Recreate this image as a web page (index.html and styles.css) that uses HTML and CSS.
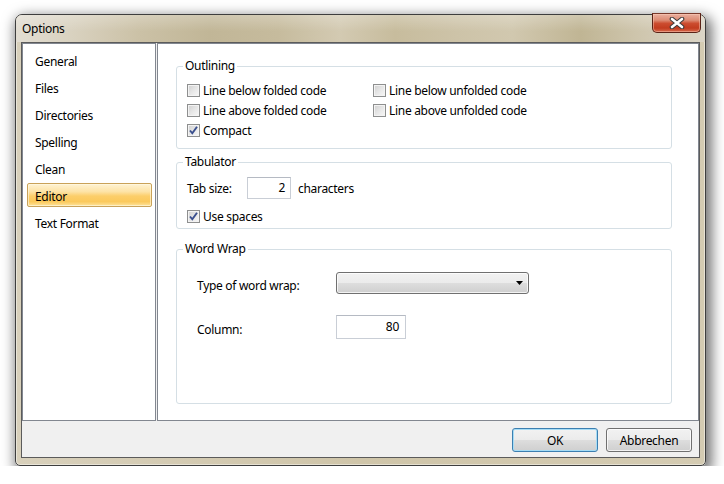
FILE: index.html
```html
<!DOCTYPE html>
<html>
<head>
<meta charset="utf-8">
<title>Options</title>
<link rel="stylesheet" href="styles.css">
</head>
<body>
<div class="window">
  <div class="titlebar">
    <span class="title">Options</span>
    <button class="close" aria-label="Close">
      <svg width="16" height="12" viewBox="0 0 16 12">
        <path d="M3 2 L13 10 M13 2 L3 10" stroke="#3b3b3b" stroke-width="4.6" stroke-linecap="round"/>
        <path d="M3 2 L13 10 M13 2 L3 10" stroke="#ffffff" stroke-width="2.6" stroke-linecap="round"/>
      </svg>
    </button>
  </div>
  <div class="client">
    <div class="panels">
      <ul class="nav">
        <li>General</li>
        <li>Files</li>
        <li>Directories</li>
        <li>Spelling</li>
        <li>Clean</li>
        <li class="active">Editor</li>
        <li>Text Format</li>
      </ul>
      <div class="page">
        <fieldset class="group outlining">
          <legend>Outlining</legend>
          <div class="grid2">
            <label class="cb"><span class="box"></span>Line below folded code</label>
            <label class="cb"><span class="box"></span>Line below unfolded code</label>
            <label class="cb"><span class="box"></span>Line above folded code</label>
            <label class="cb"><span class="box"></span>Line above unfolded code</label>
            <label class="cb"><span class="box"><svg width="11" height="11" viewBox="0 0 11 11"><path d="M2 5.5 L4.3 8.3 L9 1.8" fill="none" stroke="#3a4f8e" stroke-width="1.9"/></svg></span>Compact</label>
          </div>
        </fieldset>
        <fieldset class="group tabulator">
          <legend>Tabulator</legend>
          <div class="row tabrow">
            <span class="lbl-tab">Tab size:</span>
            <span class="input small">2</span>
            <span class="unit">characters</span>
          </div>
          <label class="cb spaced"><span class="box"><svg width="11" height="11" viewBox="0 0 11 11"><path d="M2 5.5 L4.3 8.3 L9 1.8" fill="none" stroke="#3a4f8e" stroke-width="1.9"/></svg></span>Use spaces</label>
        </fieldset>
        <fieldset class="group wordwrap">
          <legend>Word Wrap</legend>
          <div class="row wrap-row">
            <span class="lbl">Type of word wrap:</span>
            <div class="select">
              <svg width="8" height="5" viewBox="0 0 8 5"><path d="M0 0 H7 L3.5 4 Z" fill="#000"/></svg>
            </div>
          </div>
          <div class="row col-row">
            <span class="lbl">Column:</span>
            <span class="input wide">80</span>
          </div>
        </fieldset>
      </div>
    </div>
    <div class="footer">
      <button class="btn default">OK</button>
      <button class="btn">Abbrechen</button>
    </div>
  </div>
</div>
</body>
</html>
```
FILE: styles.css
```css
html, body {
  margin: 0;
  background: #ffffff;
}
body {
  font-family: "Noto Sans", "Open Sans", sans-serif;
  font-size: 12px;
  letter-spacing: -0.3px;
  color: #000;
}
.window {
  box-sizing: border-box;
  width: 691px;
  height: 452px;
  margin: 14px 0 0 15px;
  border: 1px solid #3e3e3e;
  border-radius: 7px 7px 5px 5px;
  background: linear-gradient(90deg, #d8d0bb 0%, #cfc5a9 50%, #d4cbb2 100%);
  padding: 0 5px 7px;
  display: flex;
  flex-direction: column;
  box-shadow: 3px 5px 13px 3px rgba(0, 0, 0, 0.55), inset 0 0 0 1px rgba(255, 255, 255, 0.45);
}
.titlebar {
  height: 27px;
  margin: 0 -5px;
  padding-left: 6px;
  display: flex;
  align-items: center;
  border-radius: 6px 6px 0 0;
  background:
    linear-gradient(rgba(255,255,255,0.25), rgba(255,255,255,0) 60%),
    linear-gradient(90deg, #e2ddd2 0%, #d9d2c0 8%, #cbc1a6 18%, #c1b697 28%, #c6bb9d 38%, #d3cab2 47%, #c7bc9d 55%, #cdc3a8 64%, #d1c8af 72%, #c0b594 82%, #cec5ac 90%, #dbd5c7 100%);
}
.title {
  font-size: 12px;
  color: #000;
}
.close {
  margin-left: auto;
  margin-right: 4px;
  align-self: flex-start;
  margin-top: -2px;
  width: 49px;
  height: 20px;
  padding: 0;
  border: 1px solid #5a2216;
  border-top-color: #7a3a2c;
  border-radius: 0 0 5px 5px;
  background: linear-gradient(#eab0a0 0%, #dc8a72 35%, #cc4d30 52%, #c23c1f 78%, #d7694d 100%);
  box-shadow: inset 0 0 0 1px rgba(255, 210, 190, 0.45);
  display: flex;
  align-items: center;
  justify-content: center;
}
.client {
  flex: 1;
  border: 1px solid #5b5b5b;
  background: #f0f0f0;
  display: flex;
  flex-direction: column;
}
.panels {
  display: flex;
  gap: 1px;
  height: 378px;
}
.nav {
  box-sizing: border-box;
  width: 134px;
  margin: 0;
  padding: 4px 3px 0 4px;
  list-style: none;
  border: 1px solid #828790;
  background: #fff;
}
.nav li {
  box-sizing: border-box;
  height: 24px;
  line-height: 19px;
  padding: 3px 0 0 7px;
  margin-bottom: 3px;
  border: 1px solid transparent;
  border-radius: 2px;
}
.nav li.active {
  border-color: #c9a259;
  background: linear-gradient(#fff3d3 0%, #fde3a6 35%, #fcce6a 55%, #fbc95c 80%, #fde39c 100%);
  box-shadow: inset 0 0 0 1px rgba(255, 250, 230, 0.6);
}
.page {
  box-sizing: border-box;
  flex: 1;
  border: 1px solid #828790;
  background: #fff;
  padding: 14px 26px 0 18px;
}
.group {
  margin: 0;
  min-width: 0;
  border: 1px solid #d5dfe5;
  border-radius: 3px;
  padding: 6px 10px 8px 10px;
}
.group legend {
  margin-left: -4px;
  padding: 0 2px;
  line-height: 16px;
  font-size: 12px;
}
.grid2 {
  display: grid;
  grid-template-columns: 186px auto;
  grid-auto-rows: 20px;
}
.cb {
  display: flex;
  align-items: center;
  height: 20px;
  white-space: nowrap;
}
.box {
  box-sizing: border-box;
  width: 13px;
  height: 13px;
  margin-right: 3px;
  border: 1px solid #8e8f8f;
  background: linear-gradient(135deg, #cfcfcf 0%, #e6e6e6 50%, #f8f8f8 100%);
  box-shadow: inset 0 0 0 1px #f3f3f3;
  display: flex;
  align-items: center;
  justify-content: center;
  flex: none;
}
.tabulator {
  margin-top: 5px;
  padding-bottom: 2px;
}
.row {
  display: flex;
  align-items: center;
}
.tabrow {
  height: 24px;
}
.lbl-tab {
  width: 60px;
  padding-top: 1px;
}
.input {
  box-sizing: border-box;
  border: 1px solid #c9ced6;
  border-top-color: #b5bac3;
  background: #fff;
  text-align: right;
  display: block;
}
.input.small {
  width: 44px;
  height: 22px;
  line-height: 20px;
  padding-right: 5px;
}
.unit {
  margin-left: 7px;
}
.cb.spaced {
  margin-top: 6px;
}
.wordwrap {
  margin-top: 12px;
  padding-bottom: 64px;
}
.wrap-row {
  margin-top: 9px;
  padding-left: 10px;
  height: 22px;
}
.col-row {
  margin-top: 21px;
  padding-left: 10px;
  height: 24px;
}
.lbl {
  width: 139px;
  padding-top: 4px;
}
.select {
  box-sizing: border-box;
  width: 193px;
  height: 22px;
  border: 1px solid #707070;
  border-radius: 3px;
  background: linear-gradient(#f2f2f2 0%, #ebebeb 50%, #dddddd 52%, #cfcfcf 100%);
  box-shadow: inset 0 0 0 1px rgba(255, 255, 255, 0.75);
  display: flex;
  align-items: center;
  justify-content: flex-end;
  padding-right: 4px;
}
.input.wide {
  width: 70px;
  height: 24px;
  line-height: 22px;
  padding-right: 6px;
}
.footer {
  flex: 1;
  display: flex;
  justify-content: flex-end;
  align-items: flex-start;
  gap: 8px;
  padding: 7px 7px 0 0;
}
.btn {
  box-sizing: border-box;
  width: 86px;
  height: 24px;
  padding: 0;
  font-family: inherit;
  font-size: 12px;
  letter-spacing: inherit;
  color: #000;
  border: 1px solid #707070;
  border-radius: 3px;
  background: linear-gradient(#f2f2f2 0%, #ebebeb 50%, #dddddd 52%, #cfcfcf 100%);
  box-shadow: inset 0 0 0 1px rgba(255, 255, 255, 0.75);
}
.btn.default {
  border-color: #3c7fb1;
  box-shadow: inset 0 0 0 1px #a6dcf5;
}
```
